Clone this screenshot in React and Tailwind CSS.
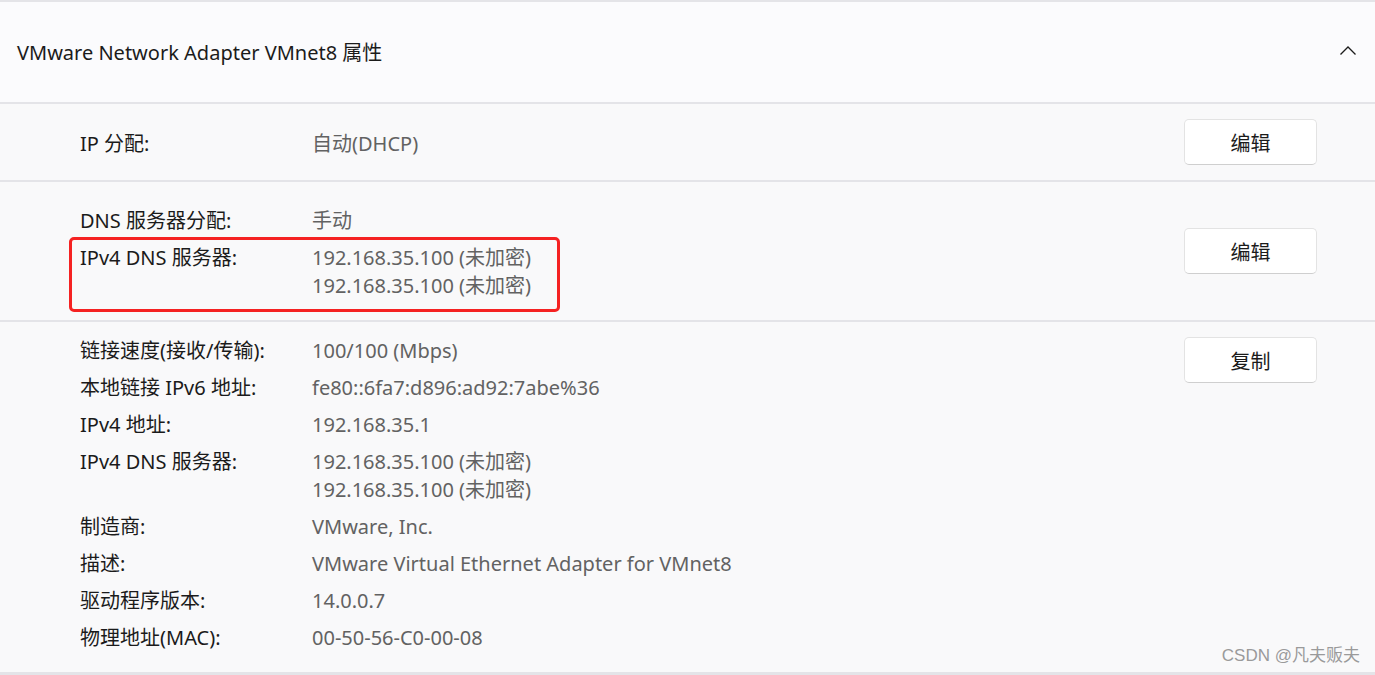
import React from "react";

const font = { fontFamily: '"Noto Sans", "Noto Sans CJK SC", sans-serif' };

function Btn({ children }) {
  return (
    <button className="w-[133px] h-[46px] pt-[3px] rounded-[5px] bg-white border border-[#e3e3e3] border-b-[#cfcfcf] text-[20px] text-[#1b1b1b] flex items-center justify-center shrink-0">
      {children}
    </button>
  );
}

function Item({ label, values }) {
  return (
    <div className="flex">
      <div className="w-[232px] shrink-0 text-[#1b1b1b]">{label}</div>
      <div className="flex flex-col text-[#626262]">
        {values.map((v, i) => (
          <div key={i}>{v}</div>
        ))}
      </div>
    </div>
  );
}

export default function App() {
  return (
    <div
      className="w-[1375px] h-[675px] overflow-hidden bg-[#f9f9fa] text-[20px] leading-[28px] flex flex-col"
      style={font}
    >
      <div className="h-[2px] bg-[#e4e4e8] shrink-0" />
      <div className="h-[100px] shrink-0 bg-[#fbfbfd] flex items-center justify-between pl-[17px] pr-[18px]">
        <div className="text-[20px] text-[#1b1b1b] mt-[2px]">VMware Network Adapter VMnet8 属性</div>
        <svg width="18" height="12" viewBox="0 0 18 12" fill="none" className="mt-[-2px]">
          <path d="M1.5 9.5 L9 2 L16.5 9.5" stroke="#1b1b1b" strokeWidth="1.3" />
        </svg>
      </div>
      <div className="h-[2px] bg-[#e4e4e8] shrink-0" />
      <div className="h-[76px] shrink-0 flex items-center justify-between pl-[80px] pr-[58px]">
        <div className="mt-[3px]">
          <Item label="IP 分配:" values={["自动(DHCP)"]} />
        </div>
        <Btn>编辑</Btn>
      </div>
      <div className="h-[2px] bg-[#e4e4e8] shrink-0" />
      <div className="relative h-[138px] shrink-0 flex items-center justify-between pl-[80px] pr-[58px]">
        <div className="flex flex-col gap-[9px] mt-[4px]">
          <Item label="DNS 服务器分配:" values={["手动"]} />
          <Item label="IPv4 DNS 服务器:" values={["192.168.35.100 (未加密)", "192.168.35.100 (未加密)"]} />
        </div>
        <Btn>编辑</Btn>
        <div className="absolute left-[69px] top-[55px] w-[491px] h-[75px] border-[3px] border-[#f52222] rounded-[5px]" />
      </div>
      <div className="h-[2px] bg-[#e4e4e8] shrink-0" />
      <div className="relative flex-1 flex items-start justify-between pl-[80px] pr-[58px] pt-[15px]">
        <div className="flex flex-col gap-[9px]">
          <Item label="链接速度(接收/传输):" values={["100/100 (Mbps)"]} />
          <Item label="本地链接 IPv6 地址:" values={["fe80::6fa7:d896:ad92:7abe%36"]} />
          <Item label="IPv4 地址:" values={["192.168.35.1"]} />
          <Item label="IPv4 DNS 服务器:" values={["192.168.35.100 (未加密)", "192.168.35.100 (未加密)"]} />
          <Item label="制造商:" values={["VMware, Inc."]} />
          <Item label="描述:" values={["VMware Virtual Ethernet Adapter for VMnet8"]} />
          <Item label="驱动程序版本:" values={["14.0.0.7"]} />
          <Item label="物理地址(MAC):" values={["00-50-56-C0-00-08"]} />
        </div>
        <Btn>复制</Btn>
        <div
          className="absolute right-[15px] bottom-[6px] text-[17px] leading-[20px] text-[#9a9a9a]"
          style={{ fontFamily: '"Liberation Sans", "Noto Sans CJK SC", sans-serif' }}
        >
          CSDN @凡夫贩夫
        </div>
      </div>
      <div className="h-[3px] bg-[#e4e4e8] shrink-0" />
    </div>
  );
}
